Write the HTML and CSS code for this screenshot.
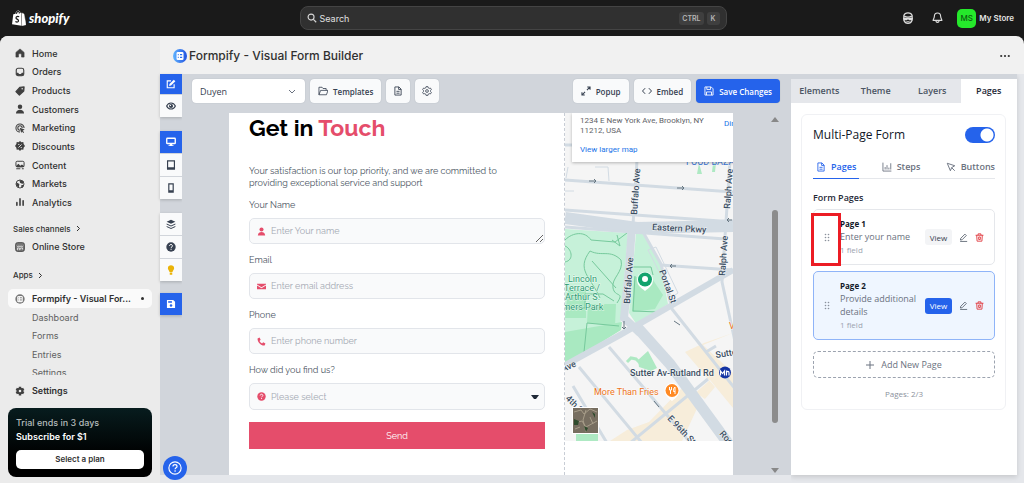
FILE: index.html
```html
<!DOCTYPE html>
<html lang="en">
<head>
<meta charset="utf-8">
<meta name="viewport" content="width=device-width, initial-scale=1">
<title>Formpify - Visual Form Builder</title>
<link rel="stylesheet" href="styles.css">
</head>
<body>
<svg class="sprite" aria-hidden="true">
  <symbol id="i-doc" viewBox="0 0 16 16"><path d="M3 1.5h6.5L13 5v9.500H3zM9 1.500V5.500h4M5.500 8.500h5M5.500 11.500h5" fill="none" stroke="currentColor" stroke-width="1.400"/></symbol>
  <symbol id="i-save" viewBox="0 0 16 16"><path d="M1.500 1.500h10l3 3v10h-13zM4.500 1.500v4h6v-4M4 14.500v-5h8v5" fill="none" stroke="currentColor" stroke-width="1.400" stroke-linejoin="round"/></symbol>
  <symbol id="i-pencil" viewBox="0 0 16 16"><path d="M3 9.500 10.500 2l2.500 2.500L5.500 12 2.500 12.500zM2 15h12.500" fill="none" stroke="currentColor" stroke-width="1.400" stroke-linejoin="round"/></symbol>
  <symbol id="i-trash" viewBox="0 0 16 16"><path d="M1 4h14M5.500 4V1.500h5V4M3 4l.7 10.500h8.600L13 4M6.500 7v4.500h3V7z" fill="none" stroke="currentColor" stroke-width="1.600" stroke-linejoin="round"/></symbol>
  <symbol id="i-grip" viewBox="0 0 8 12"><g fill="currentColor"><circle cx="2" cy="2" r="1.100"/><circle cx="6" cy="2" r="1.100"/><circle cx="2" cy="6" r="1.100"/><circle cx="6" cy="6" r="1.100"/><circle cx="2" cy="10" r="1.100"/><circle cx="6" cy="10" r="1.100"/></g></symbol>
  <symbol id="i-q" viewBox="0 0 16 16"><circle cx="8" cy="8" r="7.500" fill="currentColor"/><path d="M5.600 6.300c0-3.200 4.800-3 4.800-.1 0 1.800-2.300 1.700-2.300 3.200M8.100 10.800v1.700" fill="none" stroke="#fff" stroke-width="1.600"/></symbol>
  <symbol id="i-person" viewBox="0 0 16 16"><circle cx="8" cy="4.500" r="3.600" fill="currentColor"/><path d="M1.500 15c0-8 13-8 13 0z" fill="currentColor"/></symbol>
</svg>

<header class="topbar">
  <a class="brand" href="#" aria-label="Shopify">
    <svg width="14" height="16" viewBox="0 0 14 16" aria-hidden="true"><path d="M1.300 4.300 9 2.800l.6 13L0 14.300z" fill="#fff"/><path d="m9.700 2.900 2.300 1L14 14.700l-3.900 1.100zM3.500 4C4 1.500 5.300.6 6.500.7c1 .1 1.600 1.300 1.700 2.800" fill="#fff" stroke="#fff" stroke-width=".4"/><path d="M7.200 6.700C5.500 6 4 6.700 4 7.900s2.600 1.300 2.500 2.900c-.1 1.400-1.700 1.600-3.100.7M4.200 3.800C4.800 2 5.700 1.200 6.500 1.500c.7.200.9 1 1 1.900" fill="none" stroke="#1a1a1a" stroke-width="1.200"/></svg>
    <span>shopify</span>
  </a>
  <button class="search" type="button">
    <svg width="10" height="10" viewBox="0 0 16 16" aria-hidden="true"><circle cx="6.500" cy="6.500" r="4.800" fill="none" stroke="#d4d4d4" stroke-width="1.800"/><path d="m10.200 10.200 4.500 4.500" stroke="#d4d4d4" stroke-width="2"/></svg>
    <span class="search-text">Search</span><kbd>CTRL</kbd><kbd>K</kbd>
  </button>
  <div class="account">
    <button class="plain" type="button" aria-label="Assistant"><svg width="12" height="12" viewBox="0 0 16 16"><path d="M2.500 7V4.500C4 0 12 0 13.500 4.500V11c-2 5.500-9 5.500-11 0z" fill="none" stroke="#ddd" stroke-width="1.700"/><path d="M3 5.500c3 1.500 7 1.500 10 0" fill="none" stroke="#ddd" stroke-width="1.700"/><path d="M1.500 7.500h13v1.500L13 11h-3.500L8 9.500 6.500 11H3L1.500 9z" fill="#ddd"/><path d="M6 12.700c1 .6 3 .6 4 0" fill="none" stroke="#ddd" stroke-width="1.300"/></svg></button>
    <button class="plain" type="button" aria-label="Notifications"><svg width="11" height="12" viewBox="0 0 16 18"><path d="M8 1.500c-3 0-4.700 2-4.700 5 0 3-1.800 4-1.800 6h13c0-2-1.800-3-1.800-6 0-3-1.700-5-4.700-5zM5.500 13c.5 3.500 4.500 3.500 5 0" fill="none" stroke="#ddd" stroke-width="1.700"/></svg></button>
    <button class="store" type="button"><span class="avatar">MS</span>My Store</button>
  </div>
</header>

<div class="shell">
  <aside class="sidebar">
    <nav class="nav" aria-label="Main">
      <ul class="group group-main">
        <li><a href="#"><svg viewBox="0 0 16 16"><path d="M8 1.500 14.500 7v7.500h-4V11c0-3-5-3-5 0v3.500h-4V7z" fill="#404040" stroke="#404040" stroke-linejoin="round"/></svg>Home</a></li>
        <li><a href="#"><svg viewBox="0 0 16 16"><rect x="2" y="2" width="12" height="12" rx="3" fill="none" stroke="#404040" stroke-width="1.800"/><path d="M2 9h3l1.500 2h3L11 9h3v3l-2 2H4l-2-2z" fill="#404040"/></svg>Orders</a></li>
        <li><a href="#"><svg viewBox="0 0 16 16"><path d="M8 2 14.500 1.500 14 8l-7 6.500-5.500-5.500z" fill="#404040" stroke="#404040" stroke-width="2" stroke-linejoin="round"/><circle cx="11.500" cy="4.500" r="1.200" fill="#ebebeb"/></svg>Products</a></li>
        <li><a href="#"><svg><use href="#i-person"/></svg>Customers</a></li>
        <li><a href="#"><svg viewBox="0 0 16 16"><path d="M14.500 8A6.500 6.500 0 1 0 8 14.500M11.500 8A3.500 3.500 0 1 0 8 11.500" fill="none" stroke="#404040" stroke-width="1.700"/><path d="m7.500 7.500 8 3-3.300 1.700 2.500 2.500-1.200 1.200-2.300-2.500-1.200 2.600z" fill="#404040"/></svg>Marketing</a></li>
        <li><a href="#"><svg viewBox="0 0 16 16"><path d="m8 0 2.300 2 3-.3.500 3L16 8l-2.200 2.800-.5 3-3-.3L8 16l-2.300-2.500-3 .3-.5-3L0 8l2.200-3.300.5-3 3 .3z" fill="#404040"/><path d="m5.500 10.500 5-5M5 5.500h2M9 10.500h2" stroke="#ebebeb" stroke-width="1.400"/></svg>Discounts</a></li>
        <li><a href="#"><svg viewBox="0 0 16 16"><rect x="1.500" y="2" width="13" height="9" rx="2" fill="none" stroke="#404040" stroke-width="1.600"/><path d="m2 9 3.500-3 3 3L11 7l3.500 2.500V11H2z" fill="#404040"/><path d="M2 14h6.500M11 14h3" stroke="#404040" stroke-width="1.700"/></svg>Content</a></li>
        <li><a href="#"><svg viewBox="0 0 16 16"><circle cx="8" cy="8" r="6.400" fill="none" stroke="#404040" stroke-width="1.500"/><path d="m2 5 5 3-1 6-4-4zM7 1l7 3-2 4-4-2zM10 10l4-1-2 5-2-1z" fill="#404040"/></svg>Markets</a></li>
        <li><a href="#"><svg viewBox="0 0 16 16"><path d="M3 9v4M8 3v10M13 6v7" stroke="#404040" stroke-width="2.600" stroke-linecap="round"/></svg>Analytics</a></li>
      </ul>
      <h2 class="nav-head nav-head-sales">Sales channels <svg width="5" height="7" viewBox="0 0 5 7"><path d="m1 1 2.500 2.500L1 6" fill="none" stroke="currentColor"/></svg></h2>
      <ul class="group group-store">
        <li><a href="#"><svg viewBox="0 0 16 16"><rect x="1" y="1" width="14" height="14" rx="3" fill="#777" stroke="#404040" stroke-width="1.400"/><path d="M3 6c1 2 2.500 2 3.300 0 .8 2 2.600 2 3.400 0 .8 2 2.300 2 3.300 0M4 13V9.500h3V13M9 12V9.500h3V12" fill="none" stroke="#ebebeb" stroke-width="1.300"/></svg>Online Store</a></li>
      </ul>
      <h2 class="nav-head nav-head-apps">Apps <svg width="5" height="7" viewBox="0 0 5 7"><path d="m1 1 2.500 2.500L1 6" fill="none" stroke="currentColor"/></svg></h2>
      <ul class="group group-app">
        <li class="current"><a href="#"><svg viewBox="0 0 16 16"><circle cx="8" cy="8" r="7.500" fill="#777"/><rect x="3.500" y="3" width="9" height="10" rx="2" fill="#f5f5f5"/><path d="M5.500 6h1M8 6h3M5.500 9.500h1M8 9.500h3" stroke="#777" stroke-width="1.400"/></svg>Formpify - Visual For...<span class="dot"></span></a></li>
        <li class="sub"><a href="#">Dashboard</a></li>
        <li class="sub"><a href="#">Forms</a></li>
        <li class="sub"><a href="#">Entries</a></li>
        <li class="sub cut"><a href="#">Settings</a></li>
      </ul>
    </nav>
    <a class="settings" href="#"><svg viewBox="0 0 16 16"><path d="M8 1v14M2 4.500l12 7M14 4.500l-12 7" stroke="#404040" stroke-width="4"/><circle cx="8" cy="8" r="3.700" fill="#ebebeb" stroke="#404040" stroke-width="3.200"/></svg>Settings</a>
    <section class="trial">
      <p class="trial-note">Trial ends in 3 days</p>
      <p class="trial-offer">Subscribe for $1</p>
      <button type="button">Select a plan</button>
    </section>
  </aside>

  <main class="main">
    <div class="titlebar">
      <svg width="14" height="14" viewBox="0 0 16 16" aria-hidden="true"><defs><linearGradient id="lg"><stop stop-color="#60b4ff"/><stop offset="1" stop-color="#2050e0"/></linearGradient></defs><circle cx="8" cy="8" r="8" fill="url(#lg)"/><rect x="4" y="3.500" width="8" height="9" rx="1.500" fill="#fff"/><path d="M5.500 6.500h1M8 6.500h2.500M5.500 9.500h1M8 9.500h2.500" stroke="#2b6fee" stroke-width="1.400"/></svg>
      <h1>Formpify - Visual Form Builder</h1>
      <button class="plain" type="button" aria-label="More"><svg width="10" height="4" viewBox="0 0 10 4"><g fill="#303030"><circle cx="1.200" cy="2" r="1.100"/><circle cx="5" cy="2" r="1.100"/><circle cx="8.800" cy="2" r="1.100"/></g></svg></button>
    </div>

    <div class="app">
      <div class="rail">
        <div class="rail-group rail-first">
          <button class="on" type="button" aria-label="Edit"><svg viewBox="0 0 16 16"><path d="M8 3H2v11h11V8.500" fill="none" stroke="currentColor" stroke-width="1.800"/><path d="m5.500 8 7-7L15 3.500l-7 7-3 .5z" fill="currentColor"/></svg></button>
          <button type="button" aria-label="Preview"><svg viewBox="0 0 16 16"><path d="M1 8c3-6.500 11-6.500 14 0-3 6.500-11 6.500-14 0z" fill="none" stroke="currentColor" stroke-width="1.800"/><circle cx="8" cy="8" r="3.300" fill="currentColor"/><circle cx="7" cy="7" r="1" fill="#fff"/></svg></button>
        </div>
        <div class="rail-group">
          <button class="on" type="button" aria-label="Desktop"><svg viewBox="0 0 16 16"><rect x="1.200" y="2" width="13.600" height="8.500" rx="1" fill="none" stroke="currentColor" stroke-width="2.200"/><path d="M2 9h12v2H2zM6 11h4v2h2v1.500H4V13h2z" fill="currentColor"/></svg></button>
          <button type="button" aria-label="Tablet"><svg viewBox="0 0 16 16"><path d="M2.500 1.500h11v13h-11zM2 12.500h12" fill="none" stroke="currentColor" stroke-width="1.900"/></svg></button>
          <button type="button" aria-label="Phone"><svg viewBox="0 0 16 16"><path d="M4.500 1.500h7v13h-7zM4 12.500h8" fill="none" stroke="currentColor" stroke-width="1.900"/></svg></button>
        </div>
        <div class="rail-group">
          <button type="button" aria-label="Layers"><svg viewBox="0 0 16 16"><path d="m8 1 7 3.200-7 3.200-7-3.200zM1 7l7 3.200L15 7v1.800L8 12 1 8.800zM1 11l7 3.200 7-3.200v1.800L8 16l-7-3.200z" fill="currentColor"/></svg></button>
          <button type="button" aria-label="Help"><svg><use href="#i-q"/></svg></button>
          <button class="tip" type="button" aria-label="Tips"><svg viewBox="0 0 16 16"><path d="M5.500 11C5.500 8 3 8 3 5c0-6 10-6 10 0 0 3-2.500 3-2.500 6zM6 12h4v3.500H6z" fill="currentColor"/></svg></button>
        </div>
        <div class="rail-group rail-last">
          <button class="on" type="button" aria-label="Save"><svg viewBox="0 0 16 16"><path d="M1.500 1.500h10l3 3v10h-13z" fill="currentColor"/><path d="M3.500 3.500h6v2.500h-6z" fill="#2563eb"/><circle cx="8" cy="10.500" r="2" fill="#2563eb"/></svg></button>
        </div>
      </div>

      <section class="work">
        <div class="toolbar">
          <select class="btn form-pick" aria-label="Form"><option>Duyen</option></select>
          <button class="btn" type="button"><svg viewBox="0 0 16 16"><path d="M1.500 14V2h5l1.500 2h5v3M1.500 14l2.700-7H16l-2.500 7z" fill="none" stroke="currentColor" stroke-width="1.300" stroke-linejoin="round"/></svg>Templates</button>
          <button class="btn square" type="button" aria-label="Document"><svg><use href="#i-doc"/></svg></button>
          <button class="btn square" type="button" aria-label="Form settings"><svg viewBox="0 0 16 16"><path d="M6.500 1h3l.5 2 1.500.8 2-.5L15 5.800 13.600 7.300v1.400L15 10.200l-1.500 2.500-2-.5L10 13l-.5 2h-3L6 13l-1.500-.8-2 .5L1 10.200l1.400-1.500V7.300L1 5.800l1.500-2.500 2 .5L6 3z" fill="none" stroke="currentColor" stroke-width="1.300"/><circle cx="8" cy="8" r="2.200" fill="none" stroke="currentColor" stroke-width="1.300"/></svg></button>
          <span class="grow"></span>
          <button class="btn" type="button"><svg viewBox="0 0 16 16"><path d="M10 1.500h4.500V6M14.500 1.500 9.500 6.500M6 14.500H1.500V10M1.500 14.500l5-5" fill="none" stroke="currentColor" stroke-width="1.700"/></svg>Popup</button>
          <button class="btn" type="button"><svg viewBox="0 0 16 16"><path d="M5 3.500.8 8 5 12.500M11 3.500 15.200 8 11 12.500" fill="none" stroke="currentColor" stroke-width="1.600"/></svg>Embed</button>
          <button class="btn primary" type="button"><svg><use href="#i-save"/></svg>Save Changes</button>
        </div>

        <div class="stage">
          <div class="sheet">
            <form class="form">
              <h2>Get in <em>Touch</em></h2>
              <p>Your satisfaction is our top priority, and we are committed to<br>providing exceptional service and support</p>
              <label for="f-name">Your Name</label>
              <div class="field"><svg><use href="#i-person"/></svg><textarea id="f-name" rows="1" placeholder="Enter Your name"></textarea></div>
              <label for="f-mail">Email</label>
              <div class="field"><svg viewBox="0 0 16 16"><path d="M0 3h16v1.500L8 9.500 0 4.500zM0 6.200l8 5 8-5V13H0z" fill="currentColor"/></svg><input id="f-mail" type="email" placeholder="Enter email address"></div>
              <label for="f-tel">Phone</label>
              <div class="field"><svg viewBox="0 0 16 16"><path d="M1 2.500 4.500 1l2 4-2 2c1 2 2.500 3.500 4.500 4.500l2-2 4 2L13.500 15C7 15.500.5 9 1 2.500z" fill="currentColor"/></svg><input id="f-tel" type="tel" placeholder="Enter phone number"></div>
              <label for="f-how">How did you find us?</label>
              <div class="field"><svg><use href="#i-q"/></svg><select id="f-how"><option>Please select</option></select></div>
              <button type="button">Send</button>
            </form>
            <div class="mapcol">
              <div class="map">
                <svg class="map-art" viewBox="565 113 168 328" preserveAspectRatio="xMinYMin slice" aria-label="Map">
                  <rect x="565" y="113" width="168" height="328" fill="#f5f5f5"/>
                  <path d="M565 229 628 233 620 330 565 361zM636 233l9 1 15 28 8 42-31 21-8-12z" fill="#c6f1d9"/>
                  <path d="M588 304h28l-1 22-28-3zM565 332l57-10-1 8-35 22-21 11zM634 277h17l12 18-8 14-23 3zM568 290h18v28h-21z" fill="#a9e9c1"/>
                  <path d="M565 240c8-8 20-9 26 0l24 2 12-9M565 262c10-2 6-14 0-16M600 298c-10-22-24-28-10-47 12 6 20-2 31 9 3 12-10 18-8 28s12 3 4 15M612 240l8 6-3-11M592 261l24 27M565 308h20v-14h18l11 7M584 352l3-29 32 3M633 267h18l2 8M635 276l-2 35 26 1" fill="none" stroke="#76c99c" stroke-width="1"/>
                  <path d="M733 333l-29 10-19 9 30 35-10 12-20-14-36 37-22 8-17 11h72l18-39-8-6 18-16 23 28v-35l-30-28z" fill="#f7edda"/>
                  <path d="M699 163l3 11h-5zM713 163h3l-1 9h-3zM576 434h22v7h-22zM638 360l10-9 9 17-6 3-12-4z" fill="#aee9c3"/>
                  <path d="m627 362 4-4 5 1 4 4" fill="none" stroke="#aee9c3" stroke-width="3"/>
                  <g fill="none" stroke="#d2dbe3">
                    <path d="m565 218 72 10 96-2" stroke-width="12"/><path d="m565 210 155 11h13M565 227l160 12" stroke-width="3"/>
                    <path d="m632 226-3 42-5 50 16 15" stroke-width="8"/>
                    <path d="m636 326 34 38 60 82" stroke-width="11"/>
                    <path d="m560 368 60-33 113-65" stroke-width="6"/>
                    <path d="m565 180 168 12M637 160l-4 65M730 160l-4 62-4 60 14 64M565 145h7M660 265l73 5" stroke-width="3"/>
                    <path d="m643 232 18 32 11 45 34 43 30 38M609 347l80 94M579 367l63 76M573 386l34 57M630 443l78-64M706 352l10-6" stroke-width="3"/>
                    <path d="m566 178 2-11M595 167h13l1 14M565 191h9M648 250l8-3 22 46-6 4z" stroke-width="1"/>
                  </g>
                  <path d="M589 181h7l-2-2m2 2-2 2M677 188h7l-2-2m2 2-2 2M676 266h-6l2-2m-2 2 2 2M732 220h-5l2-2m-2 2 2 2M624 321v8l-2-2m2 2 2-2M654 401l5 6M674 321l6 4" fill="none" stroke="#667681" stroke-width="1"/>
                  <g class="road">
                    <text x="652" y="230" transform="rotate(3 652 230)">Eastern Pkwy</text>
                    <text x="637" y="215" transform="rotate(-86 637 215)">Buffalo Ave</text>
                    <text x="630" y="304" transform="rotate(-86 630 304)">Buffalo Ave</text>
                    <text x="730" y="209" transform="rotate(-86 730 209)">Ralph Ave</text>
                    <text x="725" y="276" transform="rotate(-86 725 276)">Ralph Ave</text>
                    <text x="659" y="271" transform="rotate(70 659 271)">Portal St</text>
                    <text x="716" y="358" transform="rotate(-9 716 358)">Sutter Ave</text>
                    <text x="563" y="372" transform="rotate(-23 563 372)">Ave</text>
                    <text x="667" y="419" transform="rotate(46 667 419)">E 96th St</text>
                    <text x="565" y="399" transform="rotate(44 565 399)">4th St</text>
                    <text x="719" y="434" transform="rotate(48 719 434)">Rockaway</text>
                    <text x="630" y="376">Sutter Av-Rutland Rd</text>
                  </g>
                  <g class="park"><text x="568" y="282">Lincoln</text><text x="564" y="291">Terrace /</text><text x="565" y="300">Arthur S.</text><text x="552" y="310">Somers Park</text></g>
                  <text class="bazaar" x="686" y="165">FOOD BAZAAR</text>
                  <text class="fries" x="594" y="395">More Than Fries</text>
                  <text class="fries" x="729" y="329">V</text>
                  <path d="M645 291c-4-3-8-6-8-11a8 8 0 0 1 16 0c0 5-4 8-8 11z" fill="#fff"/><circle cx="645" cy="279.500" r="7" fill="#12a36d"/><circle cx="645" cy="279" r="3" fill="#fff"/>
                  <path d="M672 401c-4-3-7.500-6-7.500-10.500a7.500 7.500 0 0 1 15 0C679.500 395 676 398 672 401z" fill="#fff"/><circle cx="672" cy="390.500" r="6.500" fill="#ff8a24"/><path d="M669.500 387v3h2v-3M670.500 390v4M675 394v-7c-1.500 1-1.500 3-1.500 4.500H675" fill="none" stroke="#fff"/>
                  <circle cx="725" cy="372.500" r="6" fill="#1434a4"/><path d="M720.500 375.500v-4.500l2 2.500 2-2.500v4.500M726.500 375.500v-5M726.500 372.500c.5-1.500 2.500-1.500 2.500.300v2.700" fill="none" stroke="#fff" stroke-width="1.200"/>
                  <rect x="572" y="407" width="27" height="27" fill="#fff"/><rect x="573" y="408" width="25" height="25" fill="#776e60"/><path d="m574 412 7-2 3 4 6-5 7 3M574 423l8-2 4 6 11-6M586 410l-3 10 3 12M575 429l5-2M590 417l3 7" fill="none" stroke="#a79d89" stroke-width="1"/><path d="m574 419 5 2-1 4h-4zM584 426l4 2-2 4zM592 412l3 2v4z" fill="#2f4b2d"/>
                </svg>
                <div class="place">
                  <address>1234 E New York Ave, Brooklyn, NY 11212, USA</address>
                  <a class="directions" href="#">Directions</a>
                  <a href="#">View larger map</a>
                </div>
              </div>
            </div>
          </div>
          <div class="scroll" aria-hidden="true"><i class="up"></i><i class="thumb"></i><i class="down"></i></div>
        </div>
      </section>

      <aside class="panel">
        <div class="tabs">
          <button type="button">Elements</button><button type="button">Theme</button><button type="button">Layers</button><button class="active" type="button">Pages</button>
        </div>
        <div class="card">
          <div class="card-head"><label for="multi">Multi-Page Form</label><input id="multi" class="switch" type="checkbox" checked></div>
          <div class="subtabs">
            <button class="active" type="button"><svg><use href="#i-doc"/></svg>Pages</button>
            <button type="button"><svg viewBox="0 0 16 16"><path d="M1.500 1v13.500H15M5 12V8M8 12V5M11 12V9M14 12V2" fill="none" stroke="currentColor" stroke-width="1.400"/></svg>Steps</button>
            <button type="button"><svg viewBox="0 0 16 16"><path d="m2 2 12 4-5 3-2 5zM9 9l5 5" fill="none" stroke="currentColor" stroke-width="1.500"/></svg>Buttons</button>
          </div>
          <h3>Form Pages</h3>
          <div class="page">
            <svg class="grip"><use href="#i-grip"/></svg>
            <div class="page-text"><strong>Page 1</strong><span>Enter your name</span><small>1 field</small></div>
            <button class="view" type="button">View</button>
            <button class="plain" type="button" aria-label="Edit page 1"><svg class="ic"><use href="#i-pencil"/></svg></button>
            <button class="plain del" type="button" aria-label="Delete page 1"><svg class="ic"><use href="#i-trash"/></svg></button>
            <span class="marker"></span>
          </div>
          <div class="page selected">
            <svg class="grip"><use href="#i-grip"/></svg>
            <div class="page-text"><strong>Page 2</strong><span>Provide additional details</span><small>1 field</small></div>
            <button class="view" type="button">View</button>
            <button class="plain" type="button" aria-label="Edit page 2"><svg class="ic"><use href="#i-pencil"/></svg></button>
            <button class="plain del" type="button" aria-label="Delete page 2"><svg class="ic"><use href="#i-trash"/></svg></button>
          </div>
          <button class="add" type="button"><svg width="8" height="8" viewBox="0 0 8 8"><path d="M4 0v8M0 4h8" stroke="currentColor"/></svg>Add New Page</button>
          <p class="count">Pages: 2/3</p>
        </div>
      </aside>
      <button class="help" type="button" aria-label="Support"><svg width="14" height="14" viewBox="0 0 16 16"><circle cx="8" cy="8" r="7" fill="none" stroke="#fff" stroke-width="1.300"/><path d="M5.700 6.300c0-3 4.600-2.800 4.600-.1 0 1.700-2.200 1.600-2.200 3.200M8.100 10.700v1.600" fill="none" stroke="#fff" stroke-width="1.400"/></svg></button>
    </div>
  </main>
</div>
</body>
</html>
```
FILE: styles.css
```css
* { box-sizing: border-box; }
html, body { height: 100%; }
body {
  margin: 0;
  display: flex;
  flex-direction: column;
  background: #1a1a1a;
  color: #303030;
  font-family: Inter, sans-serif;
  font-size: 9px;
}
ul, h1, h2, h3, p { margin: 0; padding: 0; list-style: none; }
a { color: inherit; text-decoration: none; }
button, input, select, textarea { font: inherit; color: inherit; margin: 0; padding: 0; border: 0; }
button { cursor: pointer; }
svg { flex: none; }
.sprite { position: absolute; width: 0; height: 0; }
.plain { display: flex; background: none; }

/* Top bar */
.topbar {
  display: grid;
  grid-template-columns: 1fr minmax(0, 427px) 1fr;
  align-items: center;
  height: 36px;
  flex: none;
  padding: 0 10px 0 12px;
}
.brand { display: flex; align-items: center; gap: 3px; color: #fff; font: italic 900 13px/16px Lato, sans-serif; }
.search {
  display: flex; align-items: center; gap: 3px;
  height: 24px; padding: 0 6px;
  background: #303030; border: 1px solid #444; border-radius: 8px; color: #e0e0e0;
}
.search-text { flex: 1; text-align: left; font-size: 9px; }
kbd { font: 600 7px/13px Inter, sans-serif; background: #3f3f3f; color: #b5b5b5; border-radius: 3px; padding: 0 3px; }
kbd + kbd { padding: 0 4px; }
.account { display: flex; justify-content: flex-end; align-items: center; gap: 18px; }
.store { display: flex; align-items: center; gap: 3px; margin-left: -4px; background: none; color: #e3e3e3; font-size: 8px; font-weight: 600; }
.avatar { width: 19px; border-radius: 5px; background: #25e82b; color: #0c5c10; line-height: 19px; font-weight: 500; }

.shell { flex: 1; min-height: 0; display: flex; border-radius: 8px 8px 0 0; overflow: hidden; background: #f1f1f1; }

/* Sidebar */
.sidebar { width: 160px; flex: none; display: flex; flex-direction: column; padding: 8px 8px 6px; background: #ebebeb; font-weight: 550; }
.nav { flex: 1; min-height: 0; display: flex; flex-direction: column; }
.group { display: grid; grid-auto-rows: 1fr; min-height: 0; }
.group-main { flex: 90 1 0; }
.group-store { flex: 10 1 0; }
.group-app { flex: 46 1 0; grid-template-rows: 10fr 10fr 10fr 10fr 6fr; }
.group li { min-height: 0; display: flex; }
.group a { flex: 1; display: flex; align-items: center; gap: 7px; padding: 0 8px 0 7px; }
.group a > svg, .settings svg { width: 10px; height: 10px; color: #404040; }
.current { background: #fafafa; border-radius: 5px; font-weight: 600; }
.dot { width: 3px; height: 3px; margin-left: auto; border-radius: 50%; background: #303030; }
.group .sub a { padding-left: 24px; color: #616161; font-weight: 400; }
.group .cut { overflow: hidden; }
.group .cut a { height: 18px; }
.nav-head { flex: none; display: flex; align-items: center; gap: 5px; padding-left: 5px; font-size: 8px; font-weight: 500; line-height: 18px; }
.nav-head-sales { padding-top: 8px; }
.nav-head-apps { padding: 10px 0 5px 5px; }
.settings { display: flex; align-items: center; gap: 7px; padding: 2px 0 0 7px; line-height: 27px; font-weight: 600; }
.trial { margin-top: 4px; padding: 8px; border-radius: 8px; background: linear-gradient(#071c1e, #000 70%); color: #fff; line-height: 14px; }
.trial-note { color: #b6bcbc; font-weight: 500; }
.trial-offer { font-weight: 600; }
.trial button { width: 100%; margin-top: 6px; background: #fff; border-radius: 5px; color: #303030; font-size: 8px; font-weight: 600; line-height: 19px; }

/* Title bar */
.main { flex: 1; min-width: 0; display: flex; flex-direction: column; }
.titlebar { display: flex; align-items: center; gap: 2px; flex: none; height: 38px; padding: 2px 14px 0 13px; }
.titlebar h1 { flex: 1; font-size: 12px; font-weight: 550; line-height: 16px; }

.app {
  position: relative;
  flex: 1; min-height: 0; display: flex;
  padding: 0 7px 8px 0;
  background: #e5e7eb;
  color: #374151;
  font-family: "Open Sans", sans-serif;
}

/* Tool rail */
.rail { flex: none; display: flex; flex-direction: column; gap: 14px; width: 22px; background: #d1d5db; }
.rail-group { display: grid; gap: 1px; box-shadow: 0 1px 3px #0003; }
.rail-last { margin-top: -2px; }
.rail button { display: flex; align-items: center; justify-content: center; height: 22px; background: #f9fafb; }
.rail .rail-first .on { height: 20px; }
.rail .on { background: #2563eb; color: #fff; }
.rail .tip { color: #eab308; }
.rail svg { width: 10px; height: 10px; }

/* Work area */
.work { flex: 1; min-width: 0; display: flex; flex-direction: column; background: #d1d5db; }
.toolbar { display: flex; gap: 5px; padding: 5px 11px 9px 10px; }
.btn {
  display: flex; align-items: center; gap: 5px; height: 24px; padding: 0 8px;
  background: #f9fafb; border-radius: 4px; box-shadow: 0 0 1px #9ca3af;
  font-size: 8px; font-weight: 600; white-space: nowrap;
}
.btn svg { width: 10px; height: 10px; }
.btn.square { padding: 0 7px; }
.btn.primary { background: #2563eb; color: #fff; }
.form-pick {
  appearance: none; width: 113px; font-size: 9px; font-weight: 400;
  background: #fff url("data:image/svg+xml,%3Csvg xmlns='http://www.w3.org/2000/svg' width='8' height='5'%3E%3Cpath d='m1 1 3 3 3-3' fill='none' stroke='%236b7280'/%3E%3C/svg%3E") no-repeat right 9px center;
}
.grow { flex: 1; }
.stage { flex: 1; min-height: 0; display: flex; justify-content: flex-end; padding: 1px 11px 0 47px; }
.sheet { flex: 1; min-width: 0; display: flex; background: #fff; overflow: hidden; }
.scroll { width: 10px; margin-left: 37px; display: flex; flex-direction: column; align-items: center; padding: 4px 0 2px; }
.up, .down { border: 4px solid #0000; }
.up { border-top: 0; border-bottom: 5px solid #888; }
.down { border-bottom: 0; border-top: 5px solid #888; }
.thumb { width: 6px; flex: 1; margin: 88px 0 45px; border-radius: 3px; background: #8c8c8c; }

/* Edited form */
.form { flex: 1; min-width: 0; padding: 0 19px 0 20px; color: #4b5563; font-family: Raleway, Lato, sans-serif; font-size: 9px; }
.form h2 { padding-bottom: 23px; color: #000; font-size: 23px; font-weight: 700; line-height: 29px; }
.form em { color: #e54d6b; font-style: normal; }
.form p { line-height: 12px; margin-bottom: 9px; }
.form label { display: block; line-height: 14px; margin-bottom: 6px; }
.field { position: relative; display: flex; margin-bottom: 9px; }
.field svg { position: absolute; left: 8px; top: 9px; width: 9px; height: 9px; color: #e54d6b; }
.field input, .field textarea, .field select {
  width: 100%; height: 26px; padding: 0 21px; line-height: 14px;
  background: #f9fafb; border: 1px solid #e2e5ea; border-radius: 5px;
}
.field textarea { padding-top: 5px; display: block; overflow: hidden; }
.field ::placeholder { color: #a3a8b2; opacity: 1; }
.field select {
  appearance: none; color: #a3a8b2; height: 27px;
  background: #f9fafb url("data:image/svg+xml,%3Csvg xmlns='http://www.w3.org/2000/svg' width='8' height='4'%3E%3Cpath d='M0 0h8L5 4H3z' fill='%231f2937'/%3E%3C/svg%3E") no-repeat right 5px center;
}
.form > button { width: 100%; height: 27px; margin-top: 3px; background: #e54d6b; color: #fff; }

/* Map */
.mapcol { width: 34%; max-width: 169px; flex: none; border-left: 1px dashed #c8cdd5; }
.map { position: relative; overflow: hidden; line-height: 0; }
.map-art { width: 100%; height: auto; font-family: Roboto, sans-serif; font-size: 9px; }
.map text { paint-order: stroke; stroke: #ffffffb0; stroke-width: 1px; }
.road { fill: #3c4f63; font-weight: 500; }
.park { fill: #2c9a72; }
.bazaar { fill: #3b78d8; }
.fries { fill: #ee7420; }
.place {
  position: absolute; top: 0; left: 7px; right: 0; padding: 3px 0 7px 8px;
  background: #fff; box-shadow: 0 1px 3px #0004; overflow: hidden;
  font: 8px/10px Roboto, sans-serif; color: #5f6368;
}
.place address { width: 130px; margin-bottom: 9px; font-style: normal; }
.place a { color: #1a73e8; }
.place .directions { position: absolute; left: 152px; top: 6px; }

/* Right panel */
.panel { width: 226px; flex: none; display: flex; flex-direction: column; background: #fff; border-top: 5px solid #d1d5db; box-shadow: 0 2px 5px #0002; clip-path: inset(0 -8px -8px 0); }
.tabs { display: grid; grid-template-columns: repeat(4, 1fr); }
.tabs button { background: #e5e7eb; color: #4b5563; font-size: 9px; font-weight: 600; line-height: 24px; }
.tabs .active { background: #fff; color: #1f2937; }
.card { margin: 11px 11px 0 10px; padding: 12px 10px 8px 11px; border: 1px solid #f0f1f4; border-radius: 6px; }
.card-head { display: flex; align-items: center; justify-content: space-between; color: #111827; font-size: 12px; font-weight: 500; line-height: 16px; }
.switch { appearance: none; width: 30px; height: 16px; border-radius: 8px; background: radial-gradient(circle at 22px 8px, #fff 6px, #2563eb 7px); }
.subtabs { display: flex; justify-content: space-between; margin: 13px 0 12px; border-bottom: 1px solid #e5e7eb; }
.subtabs button { display: flex; align-items: center; gap: 5px; padding: 0 3px; margin-bottom: -1px; background: none; color: #6b7280; font-size: 9px; font-weight: 600; line-height: 22px; border-bottom: 1px solid #0000; }
.subtabs .active { color: #2563eb; border-color: #2563eb; }
.subtabs button:last-child { padding-right: 0; }
.subtabs svg { width: 10px; height: 10px; }
.card h3 { color: #1f2937; font-size: 9px; font-weight: 600; line-height: 14px; margin-bottom: 4px; }
.page {
  position: relative;
  display: flex; align-items: center; gap: 7px;
  margin-bottom: 6px; padding: 7px 10px;
  border: 1px solid #e5e7eb; border-radius: 5px;
}
.page.selected { border-color: #8fb4f8; background: #eff6ff; }
.grip { width: 6px; height: 9px; color: #8b919c; }
.page-text { flex: 1; min-width: 0; margin-left: 3px; color: #6b7280; line-height: 13px; }
.page-text > * { display: block; }
.page strong { color: #111827; font-size: 8px; font-weight: 700; }
.page small { color: #9ca3af; font-size: 8px; line-height: 14px; }
.view { width: 27px; height: 16px; border-radius: 3px; background: #f3f4f6; font-size: 8px; font-weight: 500; }
.selected .view { background: #2563eb; color: #fff; }
.ic { width: 9px; height: 9px; color: #4b5563; }
.del .ic { color: #e0393e; }
.marker { position: absolute; left: -3px; top: 3px; bottom: -2px; width: 30px; border: 3px solid #ec1c24; }
.add { display: flex; align-items: center; justify-content: center; gap: 7px; width: 100%; height: 27px; margin-top: 11px; background: #fff; border: 1px dashed #9ca3af; border-radius: 5px; color: #6b7280; font-weight: 500; }
.count { margin-top: 9px; text-align: center; color: #8b919c; font-size: 8px; line-height: 14px; }

.help { position: absolute; left: 3px; bottom: 3px; display: flex; align-items: center; justify-content: center; width: 24px; height: 24px; border-radius: 50%; background: #2563eb; }
```
